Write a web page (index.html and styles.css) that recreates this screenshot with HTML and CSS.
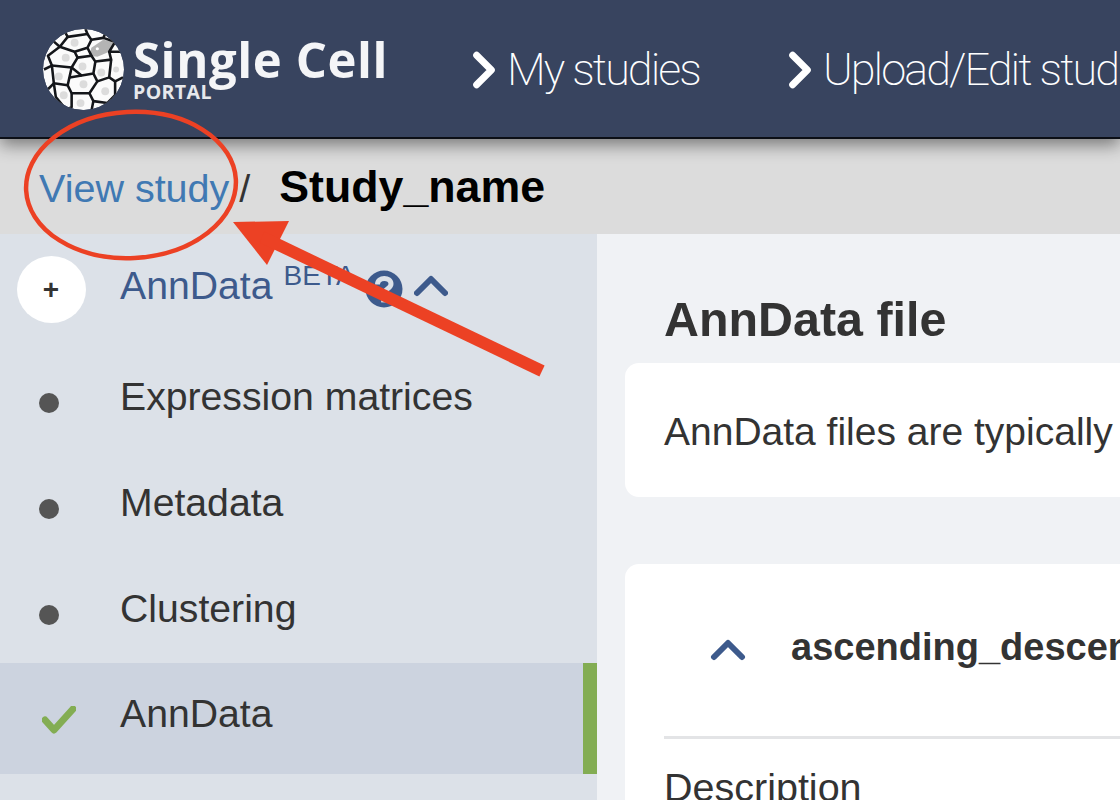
FILE: index.html
```html
<!DOCTYPE html>
<html lang="en">
<head>
<meta charset="utf-8">
<title>Single Cell Portal</title>
<link rel="stylesheet" href="styles.css">
</head>
<body>
<div class="page">
  <header class="topbar">
    <div class="brand">
      <svg class="logo" viewBox="0 0 84 84" aria-hidden="true">
        <defs><clipPath id="ball"><circle cx="42" cy="42" r="41"/></clipPath></defs>
        <g clip-path="url(#ball)">
          <circle cx="42" cy="42" r="41" fill="#fbfbfb"/>
          <path d="M50 20 L62 12 L73 14 L68 24 L56 29 L48 28 Z" fill="#b4b4b4"/>
          <g fill="#dcdcdc">
            <circle cx="33" cy="15" r="4"/><circle cx="24" cy="30" r="4"/>
            <circle cx="41" cy="39" r="4"/><circle cx="17" cy="49" r="4"/>
            <circle cx="60" cy="45" r="4"/><circle cx="42" cy="57" r="4"/>
            <circle cx="64" cy="64" r="4"/><circle cx="39" cy="76" r="4"/>
            <circle cx="75" cy="42" r="3"/><circle cx="22" cy="68" r="4"/>
          </g>
          <circle cx="56" cy="21" r="1.6" fill="#fff"/>
          <g fill="none" stroke="#14161a" stroke-width="2.6" stroke-linejoin="round">
            <path d="M22 2 L26 9 L18 19 L10 12"/>
            <path d="M44 1 L46 6 L26 9"/>
            <path d="M46 6 L50 12 L46 20 L33 24 L18 19"/>
            <path d="M18 19 L6 28 L10 38 L2 42"/>
            <path d="M33 24 L36 30 L30 40 L10 38"/>
            <path d="M46 20 L50 28 L36 30"/>
            <path d="M50 12 L62 10 L66 2"/>
            <path d="M50 28 L54 34 L52 46 L40 48 L30 40"/>
            <path d="M68 24 L70 32 L54 34"/>
            <path d="M70 32 L68 50 L56 54 L52 46"/>
            <path d="M62 10 L74 14 L68 24 L80 24"/>
            <path d="M68 50 L74 54 L82 50"/>
            <path d="M30 40 L26 58 L12 56 L10 38"/>
            <path d="M40 48 L28 50"/>
            <path d="M26 58 L30 66 L48 66 L56 54"/>
            <path d="M12 56 L6 62"/>
            <path d="M30 66 L30 80 L22 84"/>
            <path d="M12 56 L14 70 L24 82"/>
            <path d="M48 66 L52 74 L50 84"/>
            <path d="M74 54 L74 68 L66 76 L52 74"/>
            <path d="M66 76 L68 82"/>
          </g>
        </g>
      </svg>
      <div class="wordmark">
        <span class="wordmark-main">Single Cell</span>
        <span class="wordmark-sub">PORTAL</span>
      </div>
    </div>
    <nav class="topnav">
      <a class="topnav-item">
        <svg class="topnav-chevron" viewBox="0 0 24 36" aria-hidden="true"><path d="M5 4 L19 18 L5 32"/></svg>
        My studies
      </a>
      <a class="topnav-item">
        <svg class="topnav-chevron" viewBox="0 0 24 36" aria-hidden="true"><path d="M5 4 L19 18 L5 32"/></svg>
        Upload/Edit studies
      </a>
    </nav>
  </header>

  <div class="crumbs">
    <a class="crumb-link">View study</a>
    <span class="crumb-sep">/</span>
    <span class="crumb-name">Study_name</span>
  </div>

  <div class="workspace">
    <aside class="sidebar">
      <div class="step step-first">
        <span class="step-marker"><span class="plus-badge">+</span></span>
        <span class="step-label step-label-blue">AnnData</span>
        <sup class="beta">BETA</sup>
        <svg class="help" viewBox="0 0 38 38" aria-hidden="true">
          <circle cx="19" cy="19" r="18.5" fill="#3d5a8c"/>
          <path d="M12.5 14.5 C12.5 6.5 26 6.5 26 14 C26 19 19 18.5 19 24" fill="none" stroke="#dce1e8" stroke-width="5"/>
          <rect x="16.2" y="27" width="5.6" height="5.4" fill="#dce1e8"/>
        </svg>
        <svg class="caret" viewBox="0 0 34 22" aria-hidden="true"><path d="M3 18 L17 4 L31 18"/></svg>
      </div>
      <div class="step">
        <span class="step-marker"><span class="dot"></span></span>
        <span class="step-label">Expression matrices</span>
      </div>
      <div class="step">
        <span class="step-marker"><span class="dot"></span></span>
        <span class="step-label">Metadata</span>
      </div>
      <div class="step">
        <span class="step-marker"><span class="dot"></span></span>
        <span class="step-label">Clustering</span>
      </div>
      <div class="step step-active">
        <span class="step-marker">
          <svg class="check" viewBox="0 0 34 28" aria-hidden="true"><path d="M3 14 L12 24 L31 3"/></svg>
        </span>
        <span class="step-label">AnnData</span>
      </div>
    </aside>

    <main class="content">
      <h1 class="title">AnnData file</h1>
      <section class="card card-intro">
        <p class="intro">AnnData files are typically</p>
      </section>
      <section class="card card-file">
        <div class="file-head">
          <svg class="file-caret" viewBox="0 0 34 22" aria-hidden="true"><path d="M3 18 L17 4 L31 18"/></svg>
          <span class="file-name">ascending_descending</span>
        </div>
        <div class="file-field">Description</div>
      </section>
    </main>
  </div>

  <svg class="annotation" viewBox="0 0 1120 800" aria-hidden="true">
    <ellipse cx="131" cy="185" rx="105" ry="73" fill="none" stroke="#ec4124" stroke-width="4.5" transform="rotate(-3 131 185)"/>
    <path d="M233 222 L289 221 L267 265 Z" fill="#ec4124"/>
    <path d="M262 237 L542 371" fill="none" stroke="#ec4124" stroke-width="12"/>
  </svg>
</div>
</body>
</html>
```
FILE: styles.css
```css
* { box-sizing: border-box; }
html, body { margin: 0; padding: 0; }
body {
  width: 1120px;
  height: 800px;
  overflow: hidden;
  font-family: "Liberation Sans", Arial, sans-serif;
  color: #333;
  background: #f0f2f5;
}
.page {
  position: relative;
  width: 1120px;
  height: 800px;
  overflow: hidden;
  display: flex;
  flex-direction: column;
}

/* header */
.topbar {
  flex: none;
  height: 139px;
  background: #38445f;
  border-bottom: 2px solid #0c0f16;
  box-shadow: 0 6px 16px rgba(0, 0, 0, .45);
  position: relative;
  z-index: 2;
  display: flex;
  align-items: flex-start;
  padding: 28px 0 0 42px;
  white-space: nowrap;
}
.brand { display: flex; align-items: flex-start; width: 426px; flex: none; }
.logo { width: 83px; height: 83px; flex: none; }
.wordmark { display: flex; flex-direction: column; margin: 3px 0 0 8px; color: #f4f5f7; }
.wordmark-main {
  font-family: "Open Sans", sans-serif;
  font-weight: 700;
  font-size: 49px;
  line-height: 56px;
  letter-spacing: .6px;
}
.wordmark-sub {
  font-family: "Open Sans", sans-serif;
  font-weight: 700;
  font-size: 19.5px;
  line-height: 20px;
  margin-top: -5px;
  letter-spacing: .4px;
  color: #e6e8ec;
}
.topnav { display: flex; gap: 84px; padding-top: 15px; }
.topnav-item {
  display: flex;
  align-items: center;
  gap: 10px;
  font-family: Roboto, "Liberation Sans", sans-serif;
  font-weight: 200;
  font-size: 45px;
  line-height: 54px;
  letter-spacing: -1.95px;
  color: #fff;
}
.topnav-chevron {
  width: 26px;
  height: 38px;
  fill: none;
  stroke: #fff;
  stroke-width: 6.5;
  stroke-linecap: round;
  stroke-linejoin: round;
  flex: none;
  margin-left: 3px;
}

/* breadcrumb */
.crumbs {
  flex: none;
  height: 95px;
  background: #dcdcdc;
  display: flex;
  align-items: center;
  padding: 3px 0 0 39px;
  font-size: 39.5px;
  white-space: nowrap;
}
.crumb-link { color: #4079b3; }
.crumb-sep { margin-left: 10px; color: #333; }
.crumb-name { margin-left: 29px; color: #000; font-weight: 700; font-size: 44.7px; line-height: 50px; margin-top: -2px; }

/* layout */
.workspace { flex: 1; min-height: 0; display: flex; }
.sidebar {
  width: 597px;
  flex: none;
  background: #dce1e8;
  display: flex;
  flex-direction: column;
}
.step {
  height: 106px;
  display: flex;
  align-items: center;
  font-size: 39.2px;
  white-space: nowrap;
  color: #333;
}
.step-first { height: 111px; }
.step-marker { width: 120px; flex: none; display: flex; justify-content: center; padding-right: 22px; }
.step-label { line-height: 42px; margin-top: -2px; }
.step-first .step-label { margin-top: -8px; }
.step-label-blue { color: #3d5a8c; }
.plus-badge {
  width: 69px;
  height: 67px;
  margin: 0 0 0 4px;
  border-radius: 50%;
  background: #fff;
  color: #333;
  font-size: 28px;
  font-weight: 700;
  display: flex;
  align-items: center;
  justify-content: center;
}
.dot {
  width: 20px;
  height: 20px;
  margin-top: 10px;
  border-radius: 50%;
  background: #555;
}
.beta { font-size: 28px; line-height: 1; color: #3d5a8c; margin: -28px 0 0 11px; }
.help { width: 38px; height: 38px; margin: -2px 0 0 10px; flex: none; }
.caret { width: 34px; height: 22px; margin: -8px 0 0 11px; flex: none; fill: none; stroke: #3d5a8c; stroke-width: 6; stroke-linecap: round; stroke-linejoin: round; }
.step-active {
  height: 111px;
  background: #ccd3df;
  border-right: 14px solid #83ad53;
}
.step-active .step-label { margin-top: -10px; }
.check { width: 34px; height: 28px; margin: 2px 0 0 20px; fill: none; stroke: #83ad53; stroke-width: 7; stroke-linecap: round; stroke-linejoin: round; }

/* main */
.content { flex: 1; min-width: 0; padding: 0 0 0 28px; overflow: hidden; }
.title {
  margin: 0;
  padding: 59px 0 0 39px;
  font-size: 48.4px;
  line-height: 52px;
  font-weight: 700;
  color: #333;
  white-space: nowrap;
}
.card { background: #fff; border-radius: 14px 0 0 14px; white-space: nowrap; }
.card-intro { height: 134px; margin-top: 18px; padding: 48px 0 0 39px; }
.intro { margin: 0; font-size: 39px; line-height: 42px; }
.card-file { height: 300px; margin-top: 67px; padding: 0 0 0 39px; }
.file-head {
  height: 175px;
  border-bottom: 3px solid #e3e4e6;
  display: flex;
  align-items: flex-start;
  padding: 62px 0 0 46px;
}
.file-caret { width: 36px; height: 22px; margin-top: 13px; flex: none; fill: none; stroke: #3d5a8c; stroke-width: 6; stroke-linecap: round; stroke-linejoin: round; }
.file-name { margin-left: 45px; font-size: 38px; line-height: 42px; font-weight: 700; }
.file-field { padding-top: 27px; font-size: 39.5px; line-height: 42px; }

/* hand-drawn annotation laid over the screenshot */
.annotation { position: absolute; left: 0; top: 0; width: 1120px; height: 800px; z-index: 3; pointer-events: none; }
```
